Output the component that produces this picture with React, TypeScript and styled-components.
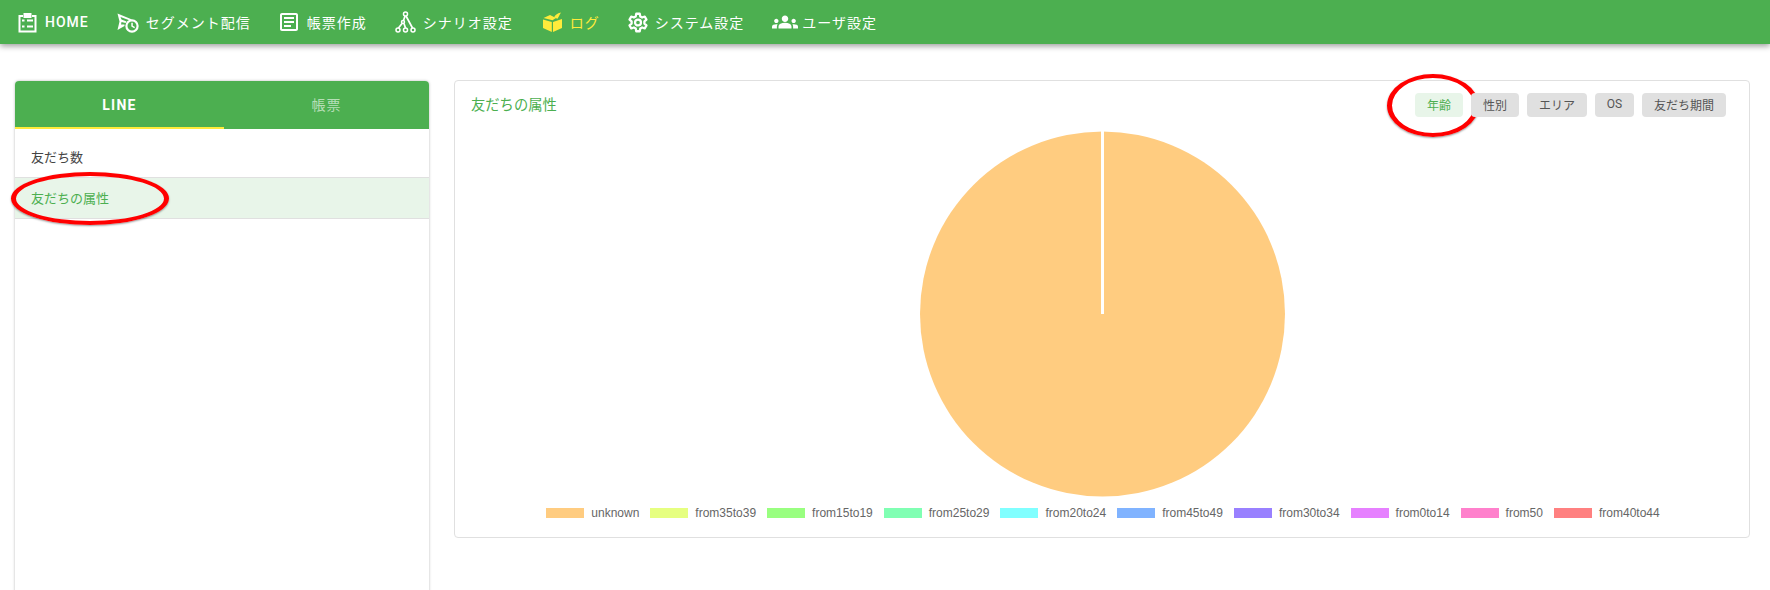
import React, { FunctionComponent } from 'react'
import styled, { createGlobalStyle } from 'styled-components'
import { MdOutlineArticle, MdGroups } from 'react-icons/md'

const Global = createGlobalStyle`
  html, body {
    margin: 0;
    padding: 0;
    background: #fff;
    overflow: hidden;
  }
  body {
    font-family: Roboto, "Noto Sans CJK JP", sans-serif;
  }
`

const Page = styled.div`
  width: 1770px;
  height: 590px;
  overflow: hidden;
`

const Header = styled.nav`
  height: 44px;
  background: #4caf50;
  display: flex;
  align-items: center;
  padding-left: 17px;
  gap: 28px;
  box-shadow: 0 2px 6px rgba(0, 0, 0, 0.4);
`

const NavItem = styled.a<{ $active?: boolean; $latin?: boolean }>`
  display: flex;
  align-items: center;
  gap: 7px;
  color: ${p => (p.$active ? '#ffeb3b' : '#fff')};
  font-size: 14px;
  font-weight: ${p => (p.$latin ? 500 : 400)};
  letter-spacing: 1px;
  white-space: nowrap;
  svg {
    display: block;
    flex-shrink: 0;
  }
`

const ArticleIcon = styled(MdOutlineArticle)`
  margin: 0 -1.5px;
`

const GroupsIcon = styled(MdGroups)`
  margin: 0 -3px 0 0;
`

const Content = styled.div`
  display: flex;
  align-items: flex-start;
  gap: 25px;
  padding: 36px 20px 0 15px;
`

const Sidebar = styled.aside`
  width: 414px;
  height: 520px;
  margin-top: 1px;
  flex-shrink: 0;
  background: #fff;
  border-radius: 4px 4px 0 0;
  box-shadow: 0 0 3px rgba(0, 0, 0, 0.28);
`

const Tabs = styled.div`
  display: flex;
  height: 48px;
  background: #4caf50;
  border-radius: 4px 4px 0 0;
`

const Tab = styled.div<{ $active?: boolean; $width: number }>`
  width: ${p => p.$width}px;
  display: flex;
  align-items: center;
  justify-content: center;
  font-size: 14px;
  font-weight: ${p => (p.$active ? 700 : 400)};
  letter-spacing: ${p => (p.$active ? 1.25 : 1)}px;
  padding-top: ${p => (p.$active ? 2 : 0)}px;
  color: ${p => (p.$active ? '#fff' : 'rgba(255, 255, 255, 0.6)')};
  box-sizing: border-box;
  border-bottom: 2px solid ${p => (p.$active ? '#ffeb3b' : 'transparent')};
`

const Row = styled.div<{ $active?: boolean }>`
  position: relative;
  display: flex;
  align-items: center;
  box-sizing: border-box;
  padding: ${p => (p.$active ? '0 0 2px 16px' : '7px 0 0 16px')};
  font-size: 13px;
  height: ${p => (p.$active ? 42 : 48)}px;
  color: ${p => (p.$active ? '#4caf50' : '#444')};
  background: ${p => (p.$active ? '#e8f5e9' : '#fff')};
  border-top: ${p => (p.$active ? '1px solid #e0e0e0' : 'none')};
  border-bottom: ${p => (p.$active ? '1px solid #e0e0e0' : 'none')};
`

const Ring = styled.span`
  position: absolute;
  border-style: solid;
  border-color: #f00;
  border-width: 4px 5px;
  border-radius: 50%;
  box-sizing: border-box;
  box-shadow: 0 1px 2px rgba(0, 0, 0, 0.4);
  pointer-events: none;
`

const RowRing = styled(Ring)`
  left: -4px;
  top: -6px;
  width: 158px;
  height: 53px;
`

const Card = styled.section`
  flex: 1;
  height: 458px;
  box-sizing: border-box;
  border: 1px solid #e0e0e0;
  border-radius: 4px;
  padding-top: 12px;
  display: flex;
  flex-direction: column;
`

const CardHead = styled.div`
  display: flex;
  align-items: center;
  justify-content: space-between;
  height: 24px;
  padding: 0 23px 0 16px;
`

const CardTitle = styled.h2`
  margin: 0;
  padding-bottom: 4px;
  font-size: 14.3px;
  font-weight: 400;
  color: #4caf50;
`

const Buttons = styled.div`
  display: flex;
  gap: 8px;
`

const FilterButton = styled.button<{ $active?: boolean; $width: number }>`
  position: relative;
  width: ${p => p.$width}px;
  height: 24px;
  padding: 0 0 2px;
  border: none;
  border-radius: 4px;
  font-family: inherit;
  font-size: 12px;
  color: ${p => (p.$active ? '#4caf50' : '#555')};
  background: ${p => (p.$active ? '#e8f5e9' : '#e0e0e0')};
`

const ButtonRing = styled(Ring)`
  left: -28px;
  top: -19px;
  width: 92px;
  height: 63px;
`

const Chart = styled.div`
  display: flex;
  justify-content: center;
  margin-top: 14px;
  svg {
    display: block;
  }
`

const Legend = styled.div`
  display: flex;
  justify-content: center;
  gap: 11px;
  margin-top: 8px;
  padding-left: 2px;
`

const LegendItem = styled.div`
  display: flex;
  align-items: center;
  gap: 7px;
  font-family: "Liberation Sans", sans-serif;
  font-size: 12px;
  line-height: 16px;
  color: #666;
`

const Swatch = styled.span<{ $color: string }>`
  width: 38px;
  height: 10px;
  background: ${p => p.$color};
`

const ClipboardIcon = () => (
  <svg width="21" height="21" viewBox="0 0 21 21" fill="none" stroke="#fff" strokeWidth="2">
    <path d="M6 4H2.500V19.500H18.500V4H15" />
    <rect x="7" y="1.500" width="7" height="4" fill="#fff" strokeWidth="1" />
    <path d="M5 8.500H7.500M5 14.500H7.500M10 8.500H16M10 14.500H16" strokeWidth="1.800" />
  </svg>
)

const SendClockIcon = () => (
  <svg width="22" height="21" viewBox="0 0 22 21" fill="#fff">
    <path d="M0.500 1.500L15 7.500 13 8.500 3.500 5 4.500 7.500 9.500 9.500 8.500 11 4.500 10 4 12.500 7.500 12.500 7.500 14 0.500 18 2.500 9.500Z" />
    <circle cx="15" cy="14" r="5.600" fill="none" stroke="#fff" strokeWidth="2.200" />
    <path d="M14.300 10.800H15.800V13.700L18 15 17.300 16.200 14.300 14.500Z" />
  </svg>
)

const ScenarioIcon = () => (
  <svg width="21" height="22" viewBox="0 0 21 22" fill="none" stroke="#fff" strokeWidth="1.500">
    <circle cx="10.500" cy="3" r="2" />
    <circle cx="3" cy="19" r="2" />
    <circle cx="10.500" cy="19" r="2" />
    <circle cx="18" cy="19" r="2" />
    <circle cx="8" cy="11" r="1.500" />
    <path d="M10 5L8.500 9.500M9 12.500L10.500 17M7 12.500L3.500 17M11 5L17.500 17" strokeWidth="1.700" />
  </svg>
)

const CubeIcon = () => (
  <svg width="22" height="20" viewBox="-2 0 22 20" fill="#ffeb3b">
    <path d="M0.500 6L7 3 13 6 9.500 8.200Z" />
    <path d="M0 7.500L8.800 10V20L0 16Z" />
    <path d="M10 10L19 7V16L10 20Z" />
    <path d="M11 5.500C12 3 14 1.500 18 0.500 16.500 3 15.500 5 14.500 6.800Z" />
  </svg>
)

const GearIcon = () => (
  <svg width="20" height="21" viewBox="1 0 22 24" fill="none" stroke="#fff" strokeWidth="2.600" strokeLinejoin="round">
    <path d="M10 2H14L14.600 5.100 16.700 6.300 19.700 5.200 21.700 8.700 19.300 10.800V13.200L21.700 15.300 19.700 18.800 16.700 17.700 14.600 18.900 14 22H10L9.400 18.900 7.300 17.700 4.300 18.800 2.300 15.300 4.700 13.200V10.800L2.300 8.700 4.300 5.200 7.300 6.300 9.400 5.100Z" />
    <circle cx="12" cy="12" r="3.400" />
  </svg>
)

type NavEntry = { label: string; icon: React.ReactNode; active?: boolean; latin?: boolean }

const navEntries: NavEntry[] = [
  { label: 'HOME', icon: <ClipboardIcon />, latin: true },
  { label: 'セグメント配信', icon: <SendClockIcon /> },
  { label: '帳票作成', icon: <ArticleIcon size={24} /> },
  { label: 'シナリオ設定', icon: <ScenarioIcon /> },
  { label: 'ログ', icon: <CubeIcon />, active: true },
  { label: 'システム設定', icon: <GearIcon /> },
  { label: 'ユーザ設定', icon: <GroupsIcon size={26} /> },
]

const filters = [
  { label: '年齢', width: 48, active: true },
  { label: '性別', width: 48 },
  { label: 'エリア', width: 60 },
  { label: 'OS', width: 39 },
  { label: '友だち期間', width: 84 },
]

const legend = [
  { label: 'unknown', color: '#ffcc80' },
  { label: 'from35to39', color: '#e6ff80' },
  { label: 'from15to19', color: '#99ff80' },
  { label: 'from25to29', color: '#80ffb3' },
  { label: 'from20to24', color: '#80ffff' },
  { label: 'from45to49', color: '#80b3ff' },
  { label: 'from30to34', color: '#9980ff' },
  { label: 'from0to14', color: '#e680ff' },
  { label: 'from50', color: '#ff80cc' },
  { label: 'from40to44', color: '#ff8080' },
]

const App: FunctionComponent = () => (
  <Page>
    <Global />
    <Header>
      {navEntries.map(entry => (
        <NavItem key={entry.label} $active={entry.active} $latin={entry.latin}>
          {entry.icon}
          {entry.label}
        </NavItem>
      ))}
    </Header>
    <Content>
      <Sidebar>
        <Tabs>
          <Tab $active $width={209}>LINE</Tab>
          <Tab $width={205}>帳票</Tab>
        </Tabs>
        <Row>友だち数</Row>
        <Row $active>
          友だちの属性
          <RowRing />
        </Row>
      </Sidebar>
      <Card>
        <CardHead>
          <CardTitle>友だちの属性</CardTitle>
          <Buttons>
            {filters.map(filter => (
              <FilterButton key={filter.label} $active={filter.active} $width={filter.width}>
                {filter.label}
                {filter.active && <ButtonRing />}
              </FilterButton>
            ))}
          </Buttons>
        </CardHead>
        <Chart>
          <svg width="366" height="366" viewBox="0 0 366 366">
            <circle cx="183.500" cy="183" r="182.500" fill="#ffcc80" />
            <rect x="182" y="0" width="3" height="183" fill="#fff" />
          </svg>
        </Chart>
        <Legend>
          {legend.map(item => (
            <LegendItem key={item.label}>
              <Swatch $color={item.color} />
              {item.label}
            </LegendItem>
          ))}
        </Legend>
      </Card>
    </Content>
  </Page>
)

export default App
